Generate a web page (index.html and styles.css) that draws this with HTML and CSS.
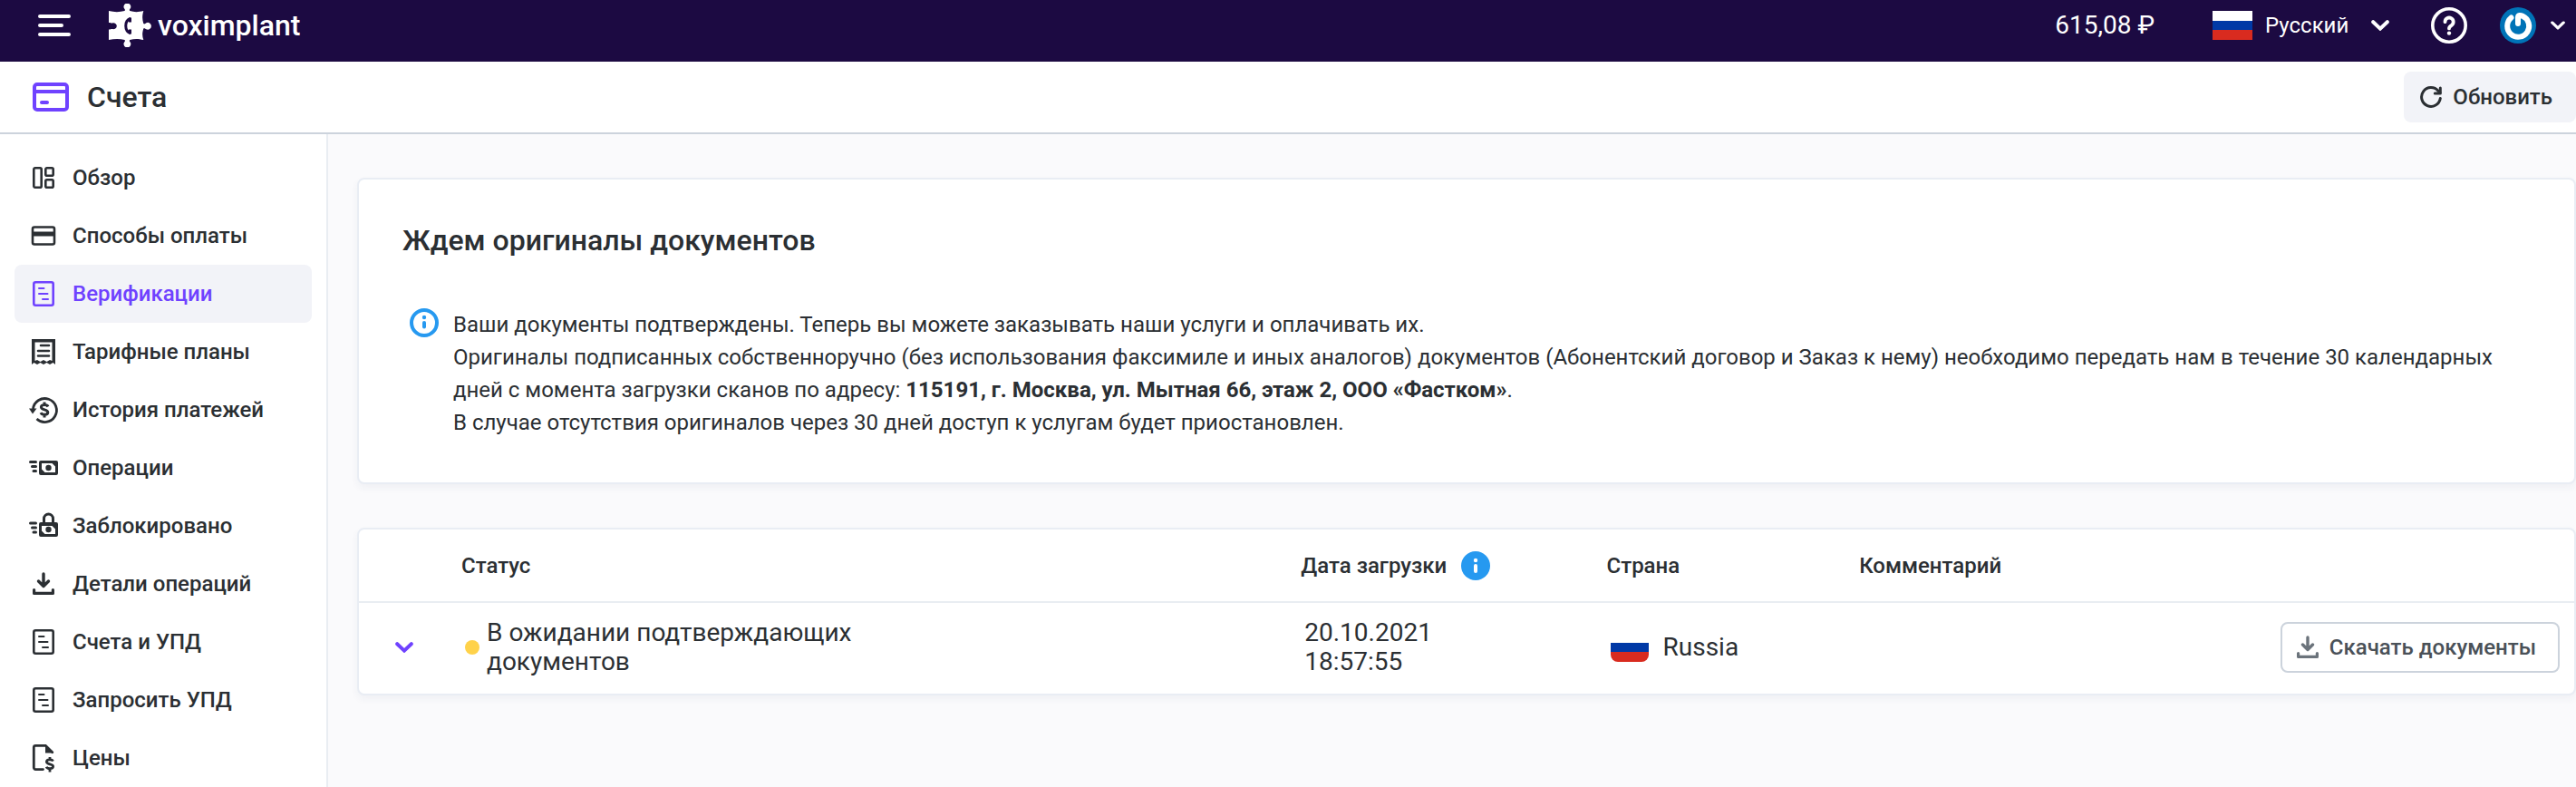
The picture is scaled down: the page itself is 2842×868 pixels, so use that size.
FILE: index.html
```
<!DOCTYPE html>
<html lang="ru">
<head>
<meta charset="utf-8">
<title>Счета — Voximplant</title>
<link rel="stylesheet" href="styles.css">
</head>
<body>
<svg class="defs" aria-hidden="true">
  <symbol id="i-doc" viewBox="0 0 32 32"><rect x="5.300" y="3.300" width="21.400" height="25.400" rx="2" fill="none" stroke="currentColor" stroke-width="2.600"/><path d="M11 10h5.500M11 16h9.500M15 22h6" fill="none" stroke="currentColor" stroke-width="2" stroke-linecap="round"/></symbol>
  <symbol id="i-download" viewBox="0 0 32 32"><path d="M16 5v13M10.500 13l5.500 5.500 5.500-5.500" fill="none" stroke="currentColor" stroke-width="3.400" stroke-linecap="round" stroke-linejoin="round"/><path d="M5.600 22.600v3.800h20.800v-3.800" fill="none" stroke="currentColor" stroke-width="3.200" stroke-linecap="round" stroke-linejoin="round"/></symbol>
  <symbol id="i-chevron" viewBox="0 0 20 12"><path d="M2.200 2.200L10 9.600l7.800-7.400" fill="none" stroke="currentColor" stroke-width="4" stroke-linecap="round"/></symbol>
  <symbol id="i-speed" viewBox="0 0 32 32"><path d="M1.500 9.500h6M3.500 14.500h4M5 19.500h2.500" fill="none" stroke="currentColor" stroke-width="3" stroke-linecap="round"/><path fill-rule="evenodd" d="M13 8h17a2 2 0 0 1 2 2v12a2 2 0 0 1-2 2H13a2 2 0 0 1-2-2V10a2 2 0 0 1 2-2zm1 3v6.500l3.500 3.500H29v-6.500L25.500 11z" fill="currentColor"/><circle cx="21.500" cy="16" r="3.200" fill="currentColor"/></symbol>
</svg>

<header class="topbar">
  <button class="bare menu" aria-label="Меню"><svg width="36" height="24" viewBox="0 0 36 24"><path d="M2 2h32M2 12h24M2 22h32" stroke="currentColor" stroke-width="4" stroke-linecap="round"/></svg></button>
  <a class="logo" href="#">
    <svg width="48" height="48" viewBox="0 0 48 48"><path fill="currentColor" d="M0 8c6 1.500 12 1.500 17.500 0 1-1.200 0-2-.7-3A3.900 3.900 0 1 1 24 5c-.7 1-1.700 1.800-.7 3 5 1.500 9 1.500 15 0-1.500 5.500-1.500 9 0 14 1.200 1 2 0 3-.7a3.900 3.900 0 1 1 0 7c-1-.7-1.800-1.700-3-.7-1.500 5-1.500 8 0 12.400-6-1.500-10-1.500-15 0-1 1.200 0 2 .7 3a3.900 3.900 0 1 1-7.200 0c.7-1 1.700-1.800.7-3-5-1.500-11.500-1.500-17.500 0V28.500c2 0 3-.8 4-.5 2 .6 4.800-.8 4.800-3.300s-2.800-4-4.800-3.300c-1 .3-2-.5-4-.5z"/><path d="M24 16.500c-7 2-7 14 0 16" fill="none" stroke="#1c0a42" stroke-width="3"/><path d="M22 15.500h3v5h-3zM22 28.500h3v5h-3z" fill="#1c0a42"/></svg>
    <span>voximplant</span>
  </a>
  <div class="tools">
    <span class="balance">615,08 ₽</span>
    <div class="lang">
      <svg class="flag" width="44" height="32" viewBox="0 0 44 32"><path fill="#fff" d="M0 0h44v11H0z"/><path fill="#0039a6" d="M0 11h44v10H0z"/><path fill="#d92b1f" d="M0 21h44v11H0z"/></svg>
      <select aria-label="Язык"><option>Русский</option></select>
      <svg class="arrow" width="20" height="12"><use href="#i-chevron"/></svg>
    </div>
    <button class="bare help" aria-label="Помощь"><svg width="40" height="40" viewBox="0 0 40 40" fill="none" stroke="currentColor" stroke-linecap="round"><circle cx="20" cy="20" r="18.200" stroke-width="3.600"/><path d="M15.500 16.200a4.600 4.600 0 1 1 7 3.900c-1.700 1-2.500 1.700-2.500 3.300" stroke-width="3.800"/><circle cx="20" cy="28.600" r="2.200" fill="currentColor" stroke="none"/></svg></button>
    <button class="bare user" aria-label="Профиль">
      <svg width="40" height="40" viewBox="0 0 40 40" fill="none"><circle cx="20" cy="20" r="20" fill="#0073b7"/><path d="M12.500 11.500a12 12 0 1 0 12.700-1.700c-2.500-1.200-5-1.200-5.200 1.200v7" stroke="#fff" stroke-width="6" stroke-linecap="round" stroke-linejoin="round"/></svg>
      <svg width="16" height="10" viewBox="0 0 20 12"><use href="#i-chevron"/></svg>
    </button>
  </div>
</header>

<div class="titlebar">
  <svg class="title-icon" width="40" height="32" viewBox="0 0 40 32" fill="none" stroke="currentColor" stroke-width="4"><rect x="2" y="2" width="36" height="28" rx="3"/><path d="M2 10h36"/><path d="M10 22h6" stroke-linecap="round"/></svg>
  <h1>Счета</h1>
  <button class="refresh"><svg width="24" height="24" viewBox="0 0 24 24" fill="none" stroke="currentColor" stroke-width="3" stroke-linecap="round" stroke-linejoin="round"><path d="M22.300 13.500A10.400 10.400 0 1 1 20 5.300l2 2.200"/><path d="M22.300 2v6h-6"/></svg>Обновить</button>
</div>

<div class="layout">
  <nav class="sidebar">
    <a href="#"><svg viewBox="0 0 32 32" fill="none" stroke="currentColor" stroke-width="2.600"><rect x="5.300" y="5.300" width="8.400" height="21.400" rx="1.500"/><rect x="18.300" y="5.300" width="8.400" height="8.400" rx="1.500"/><rect x="18.300" y="18.300" width="8.400" height="8.400" rx="1.500"/></svg>Обзор</a>
    <a href="#"><svg viewBox="0 0 32 32"><rect x="4" y="6.500" width="24" height="19" rx="2" fill="none" stroke="currentColor" stroke-width="2.600"/><path d="M4 11.500h24v5H4z" fill="currentColor"/></svg>Способы оплаты</a>
    <a class="active" href="#" aria-current="page"><svg><use href="#i-doc"/></svg>Верификации</a>
    <a href="#"><svg viewBox="0 0 32 32"><path fill-rule="evenodd" d="M3 2h26v28l-2.500-2-3.500 2-3.500-2-3.500 2-3.500-2L9 30l-3.500-2L3 30zm3.500 3.500V26L9 25l3.500 2 3.500-2 3.500 2 3.500-2 2.500 1V5.500z" fill="currentColor"/><path d="M13 9h9M10 15h12M10 20.500h12" stroke="currentColor" stroke-width="2.600" stroke-linecap="round"/></svg>Тарифные планы</a>
    <a href="#"><svg viewBox="0 0 32 32" fill="none" stroke="currentColor"><path d="M4.500 15A13 13 0 1 1 8.500 26" stroke-width="2.800"/><path d="M0 14.500h8.500L4 20.500z" fill="currentColor" stroke="none"/><path d="M21 12.500c-1.200-2.600-7.600-2.600-7.600.6 0 3.600 7.400 2 7.400 5.600 0 3.300-6.600 3.300-7.800.4M17 7.500v3M17 21v3.500" stroke-width="3"/></svg>История платежей</a>
    <a href="#"><svg><use href="#i-speed"/></svg>Операции</a>
    <a href="#"><svg viewBox="0 0 32 32"><path d="M16.500 13V8a5 5 0 0 1 10 0v5" fill="none" stroke="currentColor" stroke-width="3"/><path d="M1.500 13h6M3.500 18h4M5 23h2.500" fill="none" stroke="currentColor" stroke-width="3" stroke-linecap="round"/><path fill-rule="evenodd" d="M13 12h17a2 2 0 0 1 2 2v12a2 2 0 0 1-2 2H13a2 2 0 0 1-2-2V14a2 2 0 0 1 2-2zm1 4v5.500l3.500 3.500H29v-5.500L25.500 16z" fill="currentColor"/><circle cx="21.500" cy="20" r="3.200" fill="currentColor"/></svg>Заблокировано</a>
    <a href="#"><svg><use href="#i-download"/></svg>Детали операций</a>
    <a href="#"><svg><use href="#i-doc"/></svg>Счета и УПД</a>
    <a href="#"><svg><use href="#i-doc"/></svg>Запросить УПД</a>
    <a href="#"><svg viewBox="0 0 32 32" fill="none" stroke="currentColor"><path d="M15.500 28.600H7.300a2 2 0 0 1-2-2V4.300a2 2 0 0 1 2-2h11l7.500 7.500" stroke-width="2.800" stroke-linecap="round"/><path d="M18 2v8.500h8z" fill="currentColor" stroke="none"/><path d="M26.600 19.500c-1-2.200-7.200-2.200-7.200.8 0 3.200 7.200 1.800 7.200 5 0 3-6.400 3-7.400.4M23 15v3M23 27.500v4" stroke-width="2.800"/></svg>Цены</a>
  </nav>

  <main>
    <section class="card notice">
      <h2>Ждем оригиналы документов</h2>
      <div class="notice-body">
        <svg width="32" height="32" viewBox="0 0 32 32"><circle cx="16" cy="16" r="14" fill="none" stroke="#2699f0" stroke-width="4"/><circle cx="16" cy="10" r="2.200" fill="#2699f0"/><path d="M16 16v4.500" stroke="#2699f0" stroke-width="4" stroke-linecap="round"/></svg>
        <p>Ваши документы подтверждены. Теперь вы можете заказывать наши услуги и оплачивать их.<br>Оригиналы подписанных собственноручно (без использования факсимиле и иных аналогов) документов (Абонентский договор и Заказ к нему) необходимо передать нам в течение 30 календарных дней с момента загрузки сканов по адресу: <b>115191, г. Москва, ул. Мытная 66, этаж 2, ООО «Фастком»</b>.<br>В случае отсутствия оригиналов через 30 дней доступ к услугам будет приостановлен.</p>
      </div>
    </section>

    <section class="card">
      <table>
        <colgroup><col class="c-toggle"><col class="c-status"><col class="c-date"><col class="c-country"><col><col class="c-action"></colgroup>
        <thead>
          <tr>
            <th></th>
            <th scope="col">Статус</th>
            <th scope="col"><span class="with-info">Дата загрузки<svg width="32" height="32" viewBox="0 0 32 32"><circle cx="16" cy="16" r="16" fill="#2699f0"/><circle cx="16" cy="10" r="2.200" fill="#fff"/><path d="M16 16v6" stroke="#fff" stroke-width="4" stroke-linecap="round"/></svg></span></th>
            <th scope="col">Страна</th>
            <th scope="col">Комментарий</th>
            <th></th>
          </tr>
        </thead>
        <tbody>
          <tr>
            <td class="toggle"><button class="bare" aria-label="Развернуть"><svg width="20" height="12"><use href="#i-chevron"/></svg></button></td>
            <td><div class="status"><i class="dot"></i><span>В ожидании подтверждающих документов</span></div></td>
            <td>20.10.2021<br>18:57:55</td>
            <td><div class="country"><svg class="flag" width="42" height="32" viewBox="0 0 42 32"><path fill="#fff" d="M0 0h42v11H0z"/><path fill="#0039a6" d="M0 11h42v10H0z"/><path fill="#d92b1f" d="M0 21h42v11H0z"/></svg>Russia</div></td>
            <td></td>
            <td class="action"><button class="download"><svg width="32" height="32"><use href="#i-download"/></svg>Скачать документы</button></td>
          </tr>
        </tbody>
      </table>
    </section>
  </main>
</div>
</body>
</html>
```

FILE: styles.css
```
* { box-sizing: border-box; }

body {
  margin: 0;
  min-height: 100vh;
  display: flex;
  flex-direction: column;
  overflow-x: hidden;
  background: #fff;
  color: #2b2f33;
  font: 400 24px/32px Roboto, "Noto Sans", sans-serif;
}

svg { display: block; flex: none; }
button, select { font: inherit; color: inherit; cursor: pointer; }
h1, h2, p { margin: 0; }
h1, h2 { font-size: 32px; line-height: 38px; font-weight: 500; }

.defs { position: absolute; width: 0; height: 0; }

.bare {
  display: flex;
  align-items: center;
  padding: 0;
  border: 0;
  background: none;
}

/* top bar */
.topbar {
  display: flex;
  align-items: center;
  height: 68px;
  padding: 0 12px 12px 42px;
  background: #1c0a42;
  color: #fff;
}

.logo {
  display: flex;
  align-items: center;
  gap: 6px;
  margin-left: 42px;
  color: #fff;
  font-size: 32px;
  font-weight: 500;
  text-decoration: none;
}

.tools { display: flex; align-items: center; margin-left: auto; }
.balance { margin-right: 64px; font-size: 28px; }
.lang { display: flex; align-items: center; margin-right: 46px; }
.lang select {
  margin: 0 24px 0 14px;
  padding: 0;
  border: 0;
  background: none;
  appearance: none;
}
.help { margin-right: 36px; }
.user { gap: 16px; }

/* page title */
.titlebar {
  display: flex;
  align-items: center;
  height: 80px;
  padding-left: 36px;
  border-bottom: 2px solid #ccd3dc;
}
.title-icon { color: #6f42ff; }
.titlebar h1 { margin-left: 20px; }

.refresh {
  display: flex;
  align-items: center;
  gap: 12px;
  height: 56px;
  margin-left: auto;
  padding: 0 26px 0 18px;
  border: 0;
  border-radius: 8px;
  background: #f2f3f8;
  font-weight: 500;
}

.layout { display: flex; flex: 1; }

/* side menu */
.sidebar {
  flex: none;
  width: 362px;
  padding: 16px 16px 0;
  border-right: 2px solid #e9edf2;
}
.sidebar a {
  display: flex;
  align-items: center;
  gap: 16px;
  height: 64px;
  padding-left: 16px;
  border-radius: 8px;
  color: inherit;
  font-weight: 500;
  text-decoration: none;
}
.sidebar svg { width: 32px; height: 32px; overflow: visible; }
.sidebar .active { background: #f2f3f8; color: #6f42ff; }

/* content */
main {
  flex: 1;
  min-width: 0;
  display: flex;
  flex-direction: column;
  gap: 48px;
  padding: 48px 0 48px 32px;
  background: #fafafc;
}

.card {
  border: 2px solid #e9edf4;
  border-radius: 8px;
  background: #fff;
  box-shadow: 0 4px 8px rgba(40, 50, 90, 0.05);
}

.notice { padding: 48px; }
.notice h2 { margin-bottom: 56px; }
.notice-body { display: flex; gap: 16px; padding-left: 8px; }
.notice-body p { line-height: 36px; }

table { width: 100%; border-collapse: collapse; table-layout: fixed; }
.c-toggle { width: 113px; }
.c-status { width: 37.9%; }
.c-date { width: 13.8%; }
.c-country { width: 11.4%; }
.c-action { width: 340px; }

th {
  height: 80px;
  padding: 0;
  border-bottom: 2px solid #e9edf2;
  font-weight: 500;
  text-align: left;
}
.with-info { display: flex; align-items: center; gap: 16px; }

td { height: 101px; padding: 0 0 3px 4px; font-size: 28px; }
.toggle { padding-left: 40px; color: #6f42ff; }
.status { display: flex; align-items: center; gap: 8px; max-width: 440px; }
.dot { flex: none; width: 16px; height: 16px; border-radius: 50%; background: #ffd24a; }
.country { display: flex; align-items: center; gap: 16px; }
.country .flag { border-radius: 8px; }

.action { padding-right: 16px; }
.download {
  display: flex;
  align-items: center;
  gap: 8px;
  height: 56px;
  margin-left: auto;
  padding: 0 24px 0 12px;
  border: 2px solid #ccd3dc;
  border-radius: 8px;
  background: #fff;
  color: #4a5158;
  font-size: 24px;
  font-weight: 500;
}
.download svg { color: #6b737b; }
```
